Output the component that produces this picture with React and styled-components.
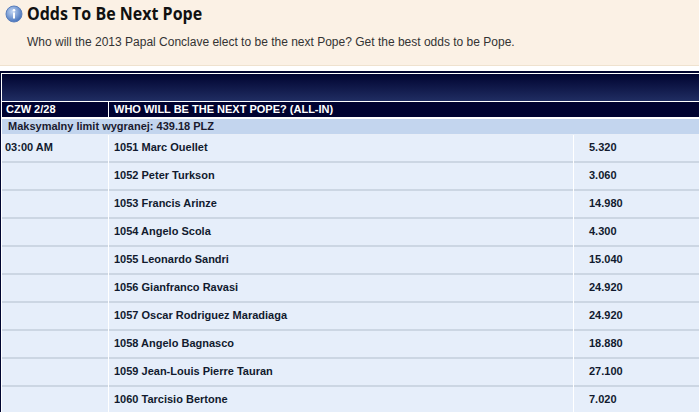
import React from 'react';
import styled, { createGlobalStyle } from 'styled-components';

const GlobalStyle = createGlobalStyle`
	body {
		margin: 0;
		background: #fff;
		font-family: "Liberation Sans", Arial, sans-serif;
	}
`;

const Intro = styled.section`
	height: 66px;
	box-sizing: border-box;
	padding: 4px 0 0 5px;
	background-color: #fbf1e5;
	border-bottom: 1px solid #efe2cf;
`;

const TitleRow = styled.div`
	display: flex;
	align-items: center;
	gap: 4px;
	height: 20px;
`;

const Title = styled.h1`
	margin: 0;
	font-family: "Open Sans", sans-serif;
	font-size: 16px;
	font-weight: 700;
	color: #111;
	transform: scaleY(1.08);
`;

const Lead = styled.p`
	margin: 11px 0 0 22px;
	font-size: 12px;
	color: #333;
`;

const Board = styled.div`
	margin-top: 5px;
	border-top: 2px solid #000530;
	border-left: 1px solid #000530;
	padding: 1px 0 0 1px;
`;

const Banner = styled.div`
	height: 27px;
	background: linear-gradient(#000430, #202d62);
	border-bottom: 1px solid #fff;
`;

const Grid = styled.div`
	display: grid;
	grid-template-columns: 106px 464px 1fr;
	column-gap: 1px;
	background-color: #fff;
`;

const HeadCell = styled.div`
	grid-column: ${p => p.$span || 'auto'};
	height: 15px;
	line-height: 15px;
	padding-left: ${p => p.$pad || 4}px;
	background-color: #000230;
	color: #fff;
	font-size: 11px;
	font-weight: bold;
	white-space: nowrap;
	border-bottom: 2px solid #fff;
`;

const Limit = styled.div`
	grid-column: 1 / -1;
	height: 15px;
	line-height: 15px;
	padding-left: 6px;
	background-color: #c3d5ee;
	color: #1a1a2e;
	font-size: 11px;
	font-weight: bold;
	border-bottom: 1px solid #e8eef8;
`;

const Cell = styled.div`
	height: 26px;
	line-height: 24px;
	padding-left: ${p => p.$pad || 5}px;
	background-color: #e6eefa;
	color: #111a2e;
	font-size: 11px;
	font-weight: bold;
	white-space: nowrap;
	border-bottom: 2px solid #ccd6e3;
`;

const InfoIcon = () => (
	<svg width="18" height="18" viewBox="0 0 18 18">
		<defs>
			<radialGradient id="ig" cx="0.4" cy="0.35" r="0.7">
				<stop offset="0" stopColor="#c2d6f4" />
				<stop offset="1" stopColor="#3f6db8" />
			</radialGradient>
		</defs>
		<circle cx="9" cy="9" r="8" fill="url(#ig)" stroke="#5a7fbd" strokeWidth="1" />
		<circle cx="9" cy="5.3" r="1.3" fill="#fff" />
		<rect x="8" y="7.5" width="2" height="6" fill="#fff" />
	</svg>
);

const odds = [
	['1051 Marc Ouellet', '5.320'],
	['1052 Peter Turkson', '3.060'],
	['1053 Francis Arinze', '14.980'],
	['1054 Angelo Scola', '4.300'],
	['1055 Leonardo Sandri', '15.040'],
	['1056 Gianfranco Ravasi', '24.920'],
	['1057 Oscar Rodriguez Maradiaga', '24.920'],
	['1058 Angelo Bagnasco', '18.880'],
	['1059 Jean-Louis Pierre Tauran', '27.100'],
	['1060 Tarcisio Bertone', '7.020'],
];

const App = () => {
	return (
		<>
			<GlobalStyle />
			<Intro>
				<TitleRow>
					<InfoIcon />
					<Title>Odds To Be Next Pope</Title>
				</TitleRow>
				<Lead>Who will the 2013 Papal Conclave elect to be the next Pope? Get the best odds to be Pope.</Lead>
			</Intro>
			<Board>
				<Banner />
				<Grid>
					<HeadCell>CZW 2/28</HeadCell>
					<HeadCell $span="2 / -1" $pad={5}>WHO WILL BE THE NEXT POPE? (ALL-IN)</HeadCell>
					<Limit>Maksymalny limit wygranej: 439.18 PLZ</Limit>
					{odds.map(([name, price], i) => (
						<React.Fragment key={name}>
							<Cell $pad={3}>{i === 0 ? '03:00 AM' : ''}</Cell>
							<Cell>{name}</Cell>
							<Cell $pad={15}>{price}</Cell>
						</React.Fragment>
					))}
				</Grid>
			</Board>
		</>
	);
};

export default App;
